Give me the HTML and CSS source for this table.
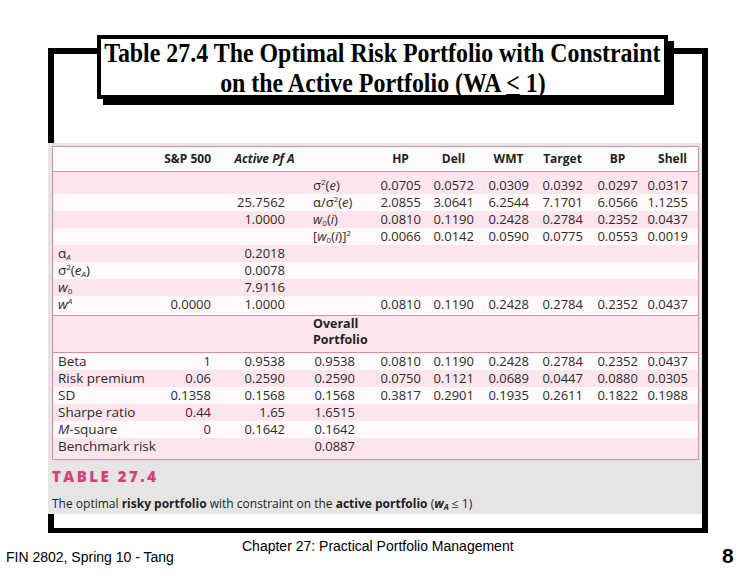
FILE: index.html
```html
<!DOCTYPE html>
<html lang="en">
<head>
<meta charset="utf-8">
<title>Table 27.4</title>
<link rel="stylesheet" href="styles.css">
</head>
<body>
<div class="slide">
  <div class="frame">
    <div class="figure">
      <div class="tbl">
        <div class="row head">
          <div class="c"></div>
          <div class="c r">S&amp;P 500</div>
          <div class="c ctr"><span><i>Active Pf A</i></span></div>
          <div class="c"></div>
          <div class="c ctr"><span>HP</span></div>
          <div class="c ctr"><span>Dell</span></div>
          <div class="c ctr"><span>WMT</span></div>
          <div class="c ctr"><span>Target</span></div>
          <div class="c ctr"><span>BP</span></div>
          <div class="c r shell">Shell</div>
        </div>

        <div class="sec top">
          <div class="row p first">
            <div class="c lab"></div><div class="c"></div><div class="c"></div>
            <div class="c sym">σ<sup>2</sup>(<i>e</i>)</div>
            <div class="c r">0.0705</div><div class="c r">0.0572</div><div class="c r">0.0309</div><div class="c r">0.0392</div><div class="c r">0.0297</div><div class="c r">0.0317</div>
          </div>
          <div class="row w">
            <div class="c lab"></div><div class="c"></div><div class="c r">25.7562</div>
            <div class="c sym">α/σ<sup>2</sup>(<i>e</i>)</div>
            <div class="c r">2.0855</div><div class="c r">3.0641</div><div class="c r">6.2544</div><div class="c r">7.1701</div><div class="c r">6.0566</div><div class="c r">1.1255</div>
          </div>
          <div class="row p">
            <div class="c lab"></div><div class="c"></div><div class="c r">1.0000</div>
            <div class="c sym"><i>w</i><sub>0</sub>(<i>i</i>)</div>
            <div class="c r">0.0810</div><div class="c r">0.1190</div><div class="c r">0.2428</div><div class="c r">0.2784</div><div class="c r">0.2352</div><div class="c r">0.0437</div>
          </div>
          <div class="row w">
            <div class="c lab"></div><div class="c"></div><div class="c"></div>
            <div class="c sym">[<i>w</i><sub>0</sub>(<i>i</i>)]<sup>2</sup></div>
            <div class="c r">0.0066</div><div class="c r">0.0142</div><div class="c r">0.0590</div><div class="c r">0.0775</div><div class="c r">0.0553</div><div class="c r">0.0019</div>
          </div>
          <div class="row p">
            <div class="c lab">α<sub><i>A</i></sub></div><div class="c"></div><div class="c r">0.2018</div>
          </div>
          <div class="row w">
            <div class="c lab">σ<sup>2</sup>(<i>e<sub>A</sub></i>)</div><div class="c"></div><div class="c r">0.0078</div>
          </div>
          <div class="row p">
            <div class="c lab"><i>w</i><sub>0</sub></div><div class="c"></div><div class="c r">7.9116</div>
          </div>
          <div class="row w last">
            <div class="c lab"><i>w</i><sup><i>A</i></sup></div><div class="c r">0.0000</div><div class="c r">1.0000</div><div class="c"></div>
            <div class="c r">0.0810</div><div class="c r">0.1190</div><div class="c r">0.2428</div><div class="c r">0.2784</div><div class="c r">0.2352</div><div class="c r">0.0437</div>
          </div>
        </div>

        <div class="row overall">
          <div class="c"></div><div class="c"></div><div class="c"></div>
          <div class="c sym bold"><div>Overall</div><div>Portfolio</div></div>
        </div>

        <div class="sec bottom">
          <div class="row w">
            <div class="c lab">Beta</div><div class="c r">1</div><div class="c r">0.9538</div><div class="c r">0.9538</div>
            <div class="c r">0.0810</div><div class="c r">0.1190</div><div class="c r">0.2428</div><div class="c r">0.2784</div><div class="c r">0.2352</div><div class="c r">0.0437</div>
          </div>
          <div class="row p">
            <div class="c lab">Risk premium</div><div class="c r">0.06</div><div class="c r">0.2590</div><div class="c r">0.2590</div>
            <div class="c r">0.0750</div><div class="c r">0.1121</div><div class="c r">0.0689</div><div class="c r">0.0447</div><div class="c r">0.0880</div><div class="c r">0.0305</div>
          </div>
          <div class="row w">
            <div class="c lab">SD</div><div class="c r">0.1358</div><div class="c r">0.1568</div><div class="c r">0.1568</div>
            <div class="c r">0.3817</div><div class="c r">0.2901</div><div class="c r">0.1935</div><div class="c r">0.2611</div><div class="c r">0.1822</div><div class="c r">0.1988</div>
          </div>
          <div class="row p">
            <div class="c lab">Sharpe ratio</div><div class="c r">0.44</div><div class="c r">1.65</div><div class="c r">1.6515</div>
          </div>
          <div class="row w">
            <div class="c lab"><i>M</i>-square</div><div class="c r">0</div><div class="c r">0.1642</div><div class="c r">0.1642</div>
          </div>
          <div class="row p last">
            <div class="c lab">Benchmark risk</div><div class="c"></div><div class="c"></div><div class="c r">0.0887</div>
          </div>
        </div>
      </div>
      <div class="cap-title">TABLE 27.4</div>
      <div class="cap">The optimal <b>risky portfolio</b> with constraint on the <b>active portfolio</b> (<b><i>w<sub>A</sub></i></b> ≤ 1)</div>
    </div>
  </div>

  <div class="title">
    <span class="tline">Table 27.4 The Optimal Risk Portfolio with Constraint</span>
    <span class="tline">on the Active Portfolio (WA <span class="u">&lt;</span> 1)</span>
  </div>

  <div class="footer">
    <div class="fin">FIN 2802, Spring 10 - Tang</div>
    <div class="chapter">Chapter 27: Practical Portfolio Management</div>
    <div class="num">8</div>
  </div>
</div>
</body>
</html>
```

FILE: styles.css
```css
html, body {
  margin: 0;
  padding: 0;
  background: #ffffff;
}

body {
  font-family: "Liberation Sans", Arial, sans-serif;
}

.slide {
  position: relative;
  width: 756px;
  height: 576px;
  overflow: hidden;
}

/* outer black frame */
.frame {
  margin: 48px 0 0 48px;
  width: 660px;
  height: 485px;
  box-sizing: border-box;
  border-style: solid;
  border-color: #000;
  border-width: 6px 6px 5px 6px;
}

/* the scanned textbook table */
.figure {
  margin: 89px 0 0 -6px;
  width: 654px;
  height: 371px;
  box-sizing: border-box;
  padding: 3px 3px 0 4px;
  background: #e6e4e4;
  font-family: "Open Sans", "Liberation Sans", sans-serif;
  color: #2e2a2b;
}

.tbl {
  border: 1px solid #d98ea8;
  background: #fffafa;
}

.row {
  display: grid;
  grid-template-columns: 110px 48px 74px 70px 66px 53px 55px 54px 55px 50px;
  height: 17px;
  line-height: 17px;
  font-size: 13px;
}

.row.p { background: #fde5ed; }
.row.w { background: #fffafa; }

.row.head {
  height: 24px;
  line-height: 24px;
  font-size: 12px;
  font-weight: 700;
  background: #fdfcfc;
  border-bottom: 1px solid #d98ea8;
  color: #231f20;
}

.row.first { padding-top: 5px; }
.sec.top .row.last { padding-bottom: 2px; }
.sec.top { border-bottom: 1px solid #d98ea8; }

.row.overall {
  height: auto;
  line-height: 16px;
  font-size: 12.5px;
  padding-bottom: 4px;
  background: #fde5ed;
  border-bottom: 1px solid #d98ea8;
}

.sec.bottom .row.last { padding-bottom: 4px; }

.c {
  white-space: nowrap;
}

.r { text-align: right; }

.ctr {
  display: flex;
  justify-content: flex-end;
}

.ctr > span {
  width: 41px;
  display: flex;
  justify-content: center;
  white-space: nowrap;
}

.shell { padding-right: 1px; }

.lab {
  padding-left: 5px;
  font-size: 13.5px;
}

.sym { padding-left: 28px; }

.bold {
  font-weight: 700;
  color: #231f20;
}

sup, sub {
  font-size: 8px;
  line-height: 0;
}

sup { vertical-align: 5px; }
sub { vertical-align: -2px; }

.cap-title {
  margin-top: 7px;
  height: 18px;
  line-height: 18px;
  font-size: 15px;
  font-weight: 800;
  letter-spacing: 2.5px;
  color: #d3417a;
}

.cap {
  margin-top: 11px;
  line-height: 16px;
  font-size: 12px;
  color: #231f20;
}

.cap b { font-weight: 700; }

/* title box */
.title {
  position: absolute;
  left: 97px;
  top: 35px;
  width: 571px;
  height: 64px;
  box-sizing: border-box;
  border: 4px solid #000;
  box-shadow: 6px 6px 0 #000;
  background: #fff;
  display: flex;
  flex-direction: column;
  align-items: center;
  font-family: "Liberation Serif", "Times New Roman", serif;
  font-weight: 700;
  font-size: 27px;
  line-height: 30px;
  color: #000;
}

.tline {
  display: block;
  white-space: nowrap;
  transform: scaleX(0.885);
  margin-top: -1px;
}

.tline + .tline { margin-top: 0; }

.u { text-decoration: underline; }

/* footer */
.footer {
  display: flex;
  align-items: flex-start;
  padding-left: 6px;
  font-size: 14px;
  line-height: 16px;
  color: #000;
}

.fin {
  width: 236px;
  margin-top: 16px;
}

.chapter {
  width: 480px;
  margin-top: 5px;
}

.num {
  margin-top: 11px;
  font-size: 21px;
  line-height: 24px;
  font-weight: 700;
}
```
